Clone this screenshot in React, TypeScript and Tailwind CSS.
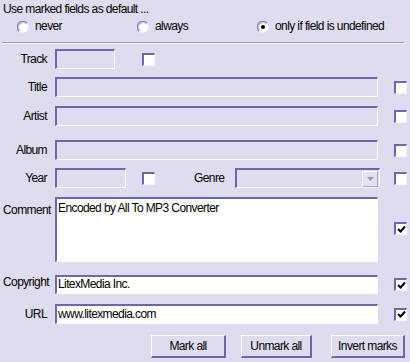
import React from "react";

function Box({ className = "", white = false, children }: { className?: string; white?: boolean; children?: React.ReactNode }) {
  return (
    <div
      className={`border-t-2 border-l-2 border-r border-b border-t-[#6a68a6] border-l-[#6a68a6] border-r-white border-b-white ${white ? "bg-white" : "bg-[#dedcee]"} ${className}`}
    >
      {children}
    </div>
  );
}

function Check({ checked = false }: { checked?: boolean }) {
  return (
    <div className="w-[13px] h-[13px] shrink-0 bg-white border-t-2 border-l-2 border-r border-b border-t-[#6a68a6] border-l-[#6a68a6] border-r-[#f4f4fa] border-b-[#f4f4fa] flex items-center justify-center">
      {checked && (
        <svg width="9" height="9" viewBox="0 0 9 9">
          <polyline points="1,4 3.5,6.5 8,1.5" fill="none" stroke="#000" strokeWidth="2" />
        </svg>
      )}
    </div>
  );
}

function Radio({ selected = false }: { selected?: boolean }) {
  return (
    <svg width="12" height="12" viewBox="0 0 12 12" className="shrink-0">
      <circle cx="6" cy="6" r="5.5" fill="#fff" />
      <path d="M10 2 A5.5 5.5 0 0 0 2 10" fill="none" stroke="#8a88b8" strokeWidth="1.5" />
      <path d="M9.5 3 A4.5 4.5 0 0 0 3 9.5" fill="none" stroke="#b8b6d8" strokeWidth="1" />
      {selected && <circle cx="6" cy="6" r="2" fill="#000" />}
    </svg>
  );
}

function Label({ children, className = "" }: { children: React.ReactNode; className?: string }) {
  return <div className={`w-[47px] shrink-0 whitespace-nowrap text-right leading-[15px] ${className}`}>{children}</div>;
}

function Button({ children, className = "" }: { children: React.ReactNode; className?: string }) {
  return (
    <div
      className={`h-[23px] whitespace-nowrap flex items-center justify-center border-t border-l border-r-2 border-b-2 border-t-white border-l-white border-r-[#6a68a6] border-b-[#6a68a6] bg-[#dedcee] ${className}`}
    >
      {children}
    </div>
  );
}

export default function App() {
  return (
    <div className="w-[410px] h-[362px] bg-[#dedcee] overflow-hidden text-[12px] tracking-[-0.6px] text-black font-['Liberation_Sans',Arial,sans-serif]">
      <div className="pl-[3px] pt-[2px] leading-[15px]">Use marked fields as default ...</div>
      <div className="flex items-center h-[13px] mt-[3px] leading-[13px]">
        <div className="flex items-center gap-[6px] ml-[17px] w-[120px]">
          <Radio />
          <span>never</span>
        </div>
        <div className="flex items-center gap-[6px] w-[120px]">
          <Radio />
          <span>always</span>
        </div>
        <div className="flex items-center gap-[6px]">
          <Radio selected />
          <span>only if field is undefined</span>
        </div>
      </div>
      <div className="mt-[9px] ml-[2px] w-[402px] h-[2px] border-t border-t-[#9896c6] border-b border-b-white" />

      {/* Track */}
      <div className="flex items-center mt-[5px] h-[20px]">
        <Label className="pr-0">Track</Label>
        <Box className="ml-[8px] w-[60px] h-[20px]" />
        <div className="ml-[27px]">
          <Check />
        </div>
      </div>

      {/* Title */}
      <div className="flex items-center mt-[8px] h-[20px]">
        <Label>Title</Label>
        <Box className="ml-[8px] w-[323px] h-[20px]" />
        <div className="ml-[16px]">
          <Check />
        </div>
      </div>

      {/* Artist */}
      <div className="flex items-center mt-[9px] h-[20px]">
        <Label>Artist</Label>
        <Box className="ml-[8px] w-[323px] h-[20px]" />
        <div className="ml-[16px]">
          <Check />
        </div>
      </div>

      {/* Album */}
      <div className="flex items-center mt-[14px] h-[20px]">
        <Label>Album</Label>
        <Box className="ml-[8px] w-[323px] h-[20px]" />
        <div className="ml-[16px]">
          <Check />
        </div>
      </div>

      {/* Year / Genre */}
      <div className="flex items-center mt-[8px] h-[20px]">
        <Label>Year</Label>
        <Box className="ml-[8px] w-[71px] h-[20px]" />
        <div className="ml-[16px]">
          <Check />
        </div>
        <div className="ml-[39px] w-[34px] leading-[15px] whitespace-nowrap">Genre</div>
        <Box className="ml-[7px] w-[145px] h-[20px] flex justify-end items-center pr-[1px]">
          <div className="w-[16px] h-[16px] bg-[#e4e2f2] border border-t-white border-l-white border-r-[#a8a6d0] border-b-[#a8a6d0] flex items-center justify-center">
            <svg width="7" height="4" viewBox="0 0 7 4">
              <polygon points="0,0 7,0 3.5,4" fill="#9896c0" />
            </svg>
          </div>
        </Box>
        <div className="ml-[14px]">
          <Check />
        </div>
      </div>

      {/* Comment */}
      <div className="flex items-start mt-[9px]">
        <Label className="pt-[6px] text-left pl-[3px]">Comment</Label>
        <Box white className="ml-[8px] w-[323px] h-[65px] px-[1px] pt-[2px] leading-[15px]">
          Encoded by All To MP3 Converter
        </Box>
        <div className="ml-[16px] mt-[25px]">
          <Check checked />
        </div>
      </div>

      {/* Copyright */}
      <div className="flex items-center mt-[13px] h-[19px]">
        <Label className="text-left pl-[3px] -mt-[4px]">Copyright</Label>
        <Box white className="ml-[8px] w-[323px] h-[19px] px-[1px] leading-[15px]">
          LitexMedia Inc.
        </Box>
        <div className="ml-[16px]">
          <Check checked />
        </div>
      </div>

      {/* URL */}
      <div className="flex items-center mt-[10px] h-[20px]">
        <Label>URL</Label>
        <Box white className="ml-[8px] w-[323px] h-[20px] px-[1px] leading-[16px]">
          www.litexmedia.com
        </Box>
        <div className="ml-[16px]">
          <Check checked />
        </div>
      </div>

      {/* Buttons */}
      <div className="flex mt-[11px]">
        <Button className="ml-[151px] w-[75px]">Mark all</Button>
        <Button className="ml-[15px] w-[71px]">Unmark all</Button>
        <Button className="ml-[19px] w-[74px]">Invert marks</Button>
      </div>
    </div>
  );
}
